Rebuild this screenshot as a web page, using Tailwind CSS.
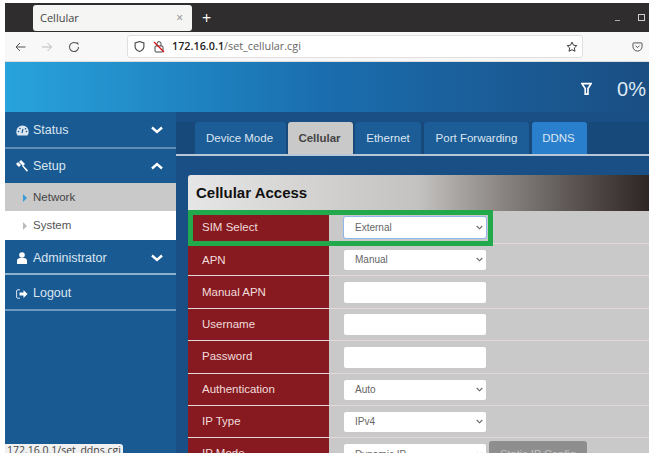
<!DOCTYPE html>
<html lang="en">
<head>
    <meta charset="UTF-8">
    <title>Cellular</title>
    <script src="https://cdn.jsdelivr.net/npm/@tailwindcss/browser@4"></script>
</head>
<body class="bg-white h-[467px] w-[659px] overflow-hidden font-['Liberation_Sans',sans-serif]">
<div class="ml-[5px] mt-[3px] w-[644px] h-[450px] overflow-hidden flex flex-col relative">

    <!-- browser tab strip -->
    <div class="h-[29px] bg-[#2f2d2d] flex items-center shrink-0 font-['Open_Sans',sans-serif]">
        <div class="ml-[28px] mt-[1px] w-[159px] h-[26px] bg-[#f5f5f4] rounded-[3px] flex items-center justify-between pl-[7px] pr-[9px] text-[11px] text-[#444]">
            <span>Cellular</span><span class="text-[#888] text-[12px]">×</span>
        </div>
        <span class="ml-[10px] text-white text-[16px] leading-none">+</span>
        <div class="ml-auto flex items-center gap-[18px] pr-[4px]">
            <div class="w-[5px] h-[1px] bg-[#aaa] mt-[5px]"></div>
            <div class="w-[7px] h-[7px] border border-[#ccc]"></div>
        </div>
    </div>

    <!-- browser toolbar -->
    <div class="h-[30px] bg-[#f8f8f8] border-b border-[#ddd] flex items-center shrink-0 font-['Open_Sans',sans-serif]">
        <svg class="ml-[10px]" width="11" height="12" viewBox="0 0 11 12" fill="none" stroke="#555" stroke-width="1"><path d="M10.500 6H1M5 2L1 6l4 4"/></svg>
        <svg class="ml-[15px]" width="12" height="12" viewBox="0 0 12 12" fill="none" stroke="#bbb" stroke-width="1"><path d="M1 6h9.500M6.500 2l4 4-4 4"/></svg>
        <svg class="ml-[15px]" width="12" height="12" viewBox="0 0 12 12" fill="none" stroke="#555" stroke-width="1.100"><path d="M10.500 6A4.500 4.500 0 1 1 8.500 2.300"/><path d="M7.600 1.400l2.800 0 0 2.800z" fill="#555" stroke="none"/></svg>
        <div class="ml-[47px] w-[456px] h-[23px] bg-white border border-[#e2dede] rounded-[3px] flex items-center pl-[6px] pr-[4px]">
            <svg width="11" height="13" viewBox="0 0 12 13" fill="none" stroke="#444" stroke-width="1.200"><path d="M6 1l4.800 1.600V6.500C10.800 9.300 8.600 11 6 12 3.400 11 1.200 9.300 1.200 6.500V2.600z"/></svg>
            <svg class="ml-[8px]" width="12" height="13" viewBox="0 0 12 13" fill="none" stroke="#444" stroke-width="1"><rect x="2" y="6" width="8" height="6" rx="1"/><path d="M4 6V3.600a2 2 0 0 1 4 0V6"/><path d="M1 2l10 10" stroke="#d11" stroke-width="1.300"/></svg>
            <span class="ml-[7px] text-[10.800px] text-[#666] whitespace-nowrap"><span class="font-semibold text-[#222]">172.16.0.1</span>/set_cellular.cgi</span>
            <svg class="ml-auto" width="12" height="12" viewBox="0 0 14 14" fill="none" stroke="#333" stroke-width="1.100"><path d="M7 1.300l1.700 3.600 3.900.5-2.900 2.700.8 3.900L7 10.100 3.500 12l.8-3.900L1.400 5.400l3.900-.5z"/></svg>
        </div>
        <svg class="ml-[49px]" width="11" height="10" viewBox="0 0 11 11" fill="none" stroke="#444" stroke-width="1"><path d="M1.400 1h8.200a.9.9 0 0 1 .9.9V5a5 5 0 0 1-10 0V1.900a.9.9 0 0 1 .9-.9z"/><path d="M3.300 4l2.200 2.200L7.700 4"/></svg>
    </div>

    <!-- page header -->
    <div class="h-[50px] bg-gradient-to-r from-[#28a3dc] via-[#1a6dae] to-[#1a4e83] flex items-center justify-end shrink-0 pr-[3px] text-white">
        <svg class="mr-[25px] mt-[3px]" width="11" height="14" viewBox="0 0 12 14" fill="none" stroke="#fff" stroke-width="1.800"><path d="M1 1.200h10L7.600 6.400V12.600H4.600V6.400z"/></svg>
        <span class="text-[20px] leading-none mt-[4px] text-[#dfe9f3]">0%</span>
    </div>

    <div class="flex grow min-h-0 bg-[#1a5a93]">
        <!-- sidebar -->
        <div class="w-[171px] shrink-0 pt-[1px] text-[12.500px] text-[#dbe6f0]">
            <div class="h-[36px] border-b-2 border-[#5f8db5] flex items-center pl-[11px] pr-[13px]">
                <svg width="13" height="11" viewBox="0 0 13 11" fill="#dbe6f0"><path d="M6.500 .5A6.200 6.200 0 0 0 .3 6.700c0 1.500.5 2.800 1.300 3.800h9.800c.8-1 1.300-2.300 1.300-3.800A6.200 6.200 0 0 0 6.500.5z"/><path d="M6 8l1-4" stroke="#1a5a93" stroke-width="1.200"/><circle cx="2.500" cy="6.500" r=".8" fill="#1a5a93"/><circle cx="4" cy="3.500" r=".8" fill="#1a5a93"/><circle cx="9.500" cy="3.800" r=".8" fill="#1a5a93"/><circle cx="10.500" cy="6.500" r=".8" fill="#1a5a93"/></svg>
                <span class="ml-[4px]">Status</span>
                <svg class="ml-auto" width="12" height="8" viewBox="0 0 12 8" fill="none" stroke="#fff" stroke-width="2.400"><path d="M1 1.500l5 4.500 5-4.500"/></svg>
            </div>
            <div class="h-[34px] flex items-center pl-[11px] pr-[13px]">
                <svg width="13" height="12" viewBox="0 0 13 12" fill="#fff"><path d="M5 0l4 4-2 2-4-4zM6 6l1-1 5 5.500-1.200 1.200zM0 4l2-2 3 3-2 2z"/></svg>
                <span class="ml-[4px]">Setup</span>
                <svg class="ml-auto" width="12" height="8" viewBox="0 0 12 8" fill="none" stroke="#fff" stroke-width="2.400"><path d="M1 6.500l5-4.500 5 4.500"/></svg>
            </div>
            <div class="h-[28px] pt-[2px] bg-[#c9c9c9] flex items-center pl-[18px] text-[11.500px] text-[#444]">
                <div class="w-0 h-0 border-y-[4px] border-y-transparent border-l-[4px] border-l-[#3b9bd6]"></div>
                <span class="ml-[6px]">Network</span>
            </div>
            <div class="h-[29px] bg-white flex items-center pl-[18px] text-[11.500px] text-[#555]">
                <div class="w-0 h-0 border-y-[4px] border-y-transparent border-l-[4px] border-l-[#bbb]"></div>
                <span class="ml-[6px]">System</span>
            </div>
            <div class="h-[35px] pt-[3px] border-b-2 border-[#8fb0cd] flex items-center pl-[11px] pr-[13px]">
                <svg width="12" height="12" viewBox="0 0 12 12" fill="#fff"><circle cx="6" cy="3" r="2.800"/><path d="M1 12V8.500C1 7 2.500 6 4 6h4c1.500 0 3 1 3 2.500V12z"/></svg>
                <span class="ml-[5px]">Administrator</span>
                <svg class="ml-auto" width="12" height="8" viewBox="0 0 12 8" fill="none" stroke="#fff" stroke-width="2.400"><path d="M1 1.500l5 4.500 5-4.500"/></svg>
            </div>
            <div class="h-[36px] pt-[3px] border-b-2 border-[#6f97bb] flex items-center pl-[11px]">
                <svg width="12" height="10" viewBox="0 0 12 10" fill="none" stroke="#dbe6f0" stroke-width="1"><path d="M4 .8H1.800A1.200 1.200 0 0 0 .6 2v6a1.200 1.200 0 0 0 1.200 1.200H4"/><path d="M3.500 3.500h4V1l4 4-4 4V6.500h-4z" fill="#fff" stroke="none"/></svg>
                <span class="ml-[5px]">Logout</span>
            </div>
        </div>

        <!-- main content -->
        <div class="grow min-w-0 bg-[#1a4f85] pt-[10px]">
            <div class="flex items-start h-[34px] border-b-2 border-[#b7c7d6] pl-[19px] gap-[2px] text-[11.500px] text-[#dbe6f0] bg-[#174a7b]">
                <div class="w-[91px] h-[32px] pt-[1px] pr-[2px] bg-[#1c5c97] rounded-t-[3px] flex items-center justify-center">Device Mode</div>
                <div class="w-[65px] h-[32px] pt-[1px] pr-[2px] bg-[#c9c9c9] text-[#444] font-bold rounded-t-[3px] flex items-center justify-center">Cellular</div>
                <div class="w-[66px] h-[32px] pt-[1px] bg-[#1c5c97] rounded-t-[3px] flex items-center justify-center">Ethernet</div>
                <div class="ml-[1px] w-[105px] h-[32px] pt-[1px] bg-[#1c5c97] rounded-t-[3px] flex items-center justify-center">Port Forwarding</div>
                <div class="ml-[1px] w-[55px] h-[32px] pt-[1px] pr-[2px] bg-[#2a7fcc] rounded-t-[3px] flex items-center justify-center">DDNS</div>
            </div>

            <!-- panel -->
            <div class="ml-[12px] mt-[19px] rounded-tl-[3px] overflow-hidden">
                <div class="h-[36px] bg-gradient-to-r from-[#e6e6e6] via-[#c4c2c0] to-[#2e2624] flex items-center pl-[8px] text-[15px] font-bold text-[#111]">Cellular Access</div>

                <div class="flex h-[33px] border-b border-[#e3d9d9] bg-[#c9c9c9]">
                    <div class="w-[141px] pt-[2px] bg-[#861a20] text-[#f1dcdc] text-[11.500px] flex items-center pl-[14px]">SIM Select</div>
                    <div class="pl-[15px] flex items-center">
                        <div class="w-[142px] h-[21px] bg-white rounded-[2px] ring-1 ring-[#8fb8e8] flex items-center pl-[11px] pr-[3px] text-[10px] text-[#666]">External
                            <svg class="ml-auto" width="7" height="5" viewBox="0 0 8 5" fill="none" stroke="#666" stroke-width="1.300"><path d="M.8.8L4 4l3.200-3.200"/></svg>
                        </div>
                    </div>
                </div>

                <div class="flex h-[32px] border-b border-[#e3d9d9] bg-[#c9c9c9]">
                    <div class="w-[141px] pt-[2px] bg-[#861a20] text-[#f1dcdc] text-[11.500px] flex items-center pl-[14px]">APN</div>
                    <div class="pl-[15px] flex items-center">
                        <div class="w-[142px] h-[20px] bg-white rounded-[2px] flex items-center pl-[11px] pr-[3px] text-[10px] text-[#666]">Manual
                            <svg class="ml-auto" width="7" height="5" viewBox="0 0 8 5" fill="none" stroke="#666" stroke-width="1.300"><path d="M.8.8L4 4l3.200-3.200"/></svg>
                        </div>
                    </div>
                </div>

                <div class="flex h-[33px] border-b border-[#e3d9d9] bg-[#c9c9c9]">
                    <div class="w-[141px] pt-[2px] bg-[#861a20] text-[#f1dcdc] text-[11.500px] flex items-center pl-[14px]">Manual APN</div>
                    <div class="pl-[15px] flex items-center"><div class="w-[142px] h-[21px] bg-white rounded-[2px]"></div></div>
                </div>

                <div class="flex h-[32px] border-b border-[#e3d9d9] bg-[#c9c9c9]">
                    <div class="w-[141px] bg-[#861a20] text-[#f1dcdc] text-[11.500px] flex items-center pl-[14px]">Username</div>
                    <div class="pl-[15px] flex items-center"><div class="w-[142px] h-[21px] bg-white rounded-[2px]"></div></div>
                </div>

                <div class="flex h-[33px] border-b border-[#e3d9d9] bg-[#c9c9c9]">
                    <div class="w-[141px] bg-[#861a20] text-[#f1dcdc] text-[11.500px] flex items-center pl-[14px]">Password</div>
                    <div class="pl-[15px] flex items-center"><div class="w-[142px] h-[21px] bg-white rounded-[2px]"></div></div>
                </div>

                <div class="flex h-[32px] border-b border-[#e3d9d9] bg-[#c9c9c9]">
                    <div class="w-[141px] bg-[#861a20] text-[#f1dcdc] text-[11.500px] flex items-center pl-[14px]">Authentication</div>
                    <div class="pl-[15px] flex items-center">
                        <div class="w-[142px] h-[20px] bg-white rounded-[2px] flex items-center pl-[11px] pr-[3px] text-[10px] text-[#666]">Auto
                            <svg class="ml-auto" width="7" height="5" viewBox="0 0 8 5" fill="none" stroke="#666" stroke-width="1.300"><path d="M.8.8L4 4l3.200-3.200"/></svg>
                        </div>
                    </div>
                </div>

                <div class="flex h-[32px] border-b border-[#e3d9d9] bg-[#c9c9c9]">
                    <div class="w-[141px] bg-[#861a20] text-[#f1dcdc] text-[11.500px] flex items-center pl-[14px]">IP Type</div>
                    <div class="pl-[15px] flex items-center">
                        <div class="w-[142px] h-[20px] bg-white rounded-[2px] flex items-center pl-[11px] pr-[3px] text-[10px] text-[#666]">IPv4
                            <svg class="ml-auto" width="7" height="5" viewBox="0 0 8 5" fill="none" stroke="#666" stroke-width="1.300"><path d="M.8.8L4 4l3.200-3.200"/></svg>
                        </div>
                    </div>
                </div>

                <div class="flex h-[32px] bg-[#c9c9c9]">
                    <div class="w-[141px] bg-[#861a20] text-[#f1dcdc] text-[11.500px] flex items-center pl-[14px]">IP Mode</div>
                    <div class="pl-[15px] flex items-center gap-[3px]">
                        <div class="w-[142px] h-[20px] bg-white rounded-[2px] flex items-center pl-[11px] pr-[3px] text-[10px] text-[#666]">Dynamic IP
                            <svg class="ml-auto" width="7" height="5" viewBox="0 0 8 5" fill="none" stroke="#666" stroke-width="1.300"><path d="M.8.8L4 4l3.200-3.200"/></svg>
                        </div>
                        <div class="w-[98px] h-[26px] bg-[#8e8e8e] rounded-[3px] flex items-center justify-center text-[11px] text-[#c4c4c4]">Static IP Config</div>
                    </div>
                </div>
            </div>
        </div>
    </div>

    <!-- highlight drawn over the SIM Select row -->
    <div class="absolute left-[183px] top-[207px] w-[305px] h-[36px] border-[5px] border-[#22a94b] pointer-events-none"></div>

    <!-- status tooltip -->
    <div class="absolute left-0 top-[441px] w-[118px] h-[14px] bg-[#f0f0f0] rounded-tr-[3px] text-[10.500px] leading-[13px] text-[#444] pl-[2px] font-['Open_Sans',sans-serif] whitespace-nowrap">172.16.0.1/set_ddns.cgi</div>
</div>
</body>
</html>
